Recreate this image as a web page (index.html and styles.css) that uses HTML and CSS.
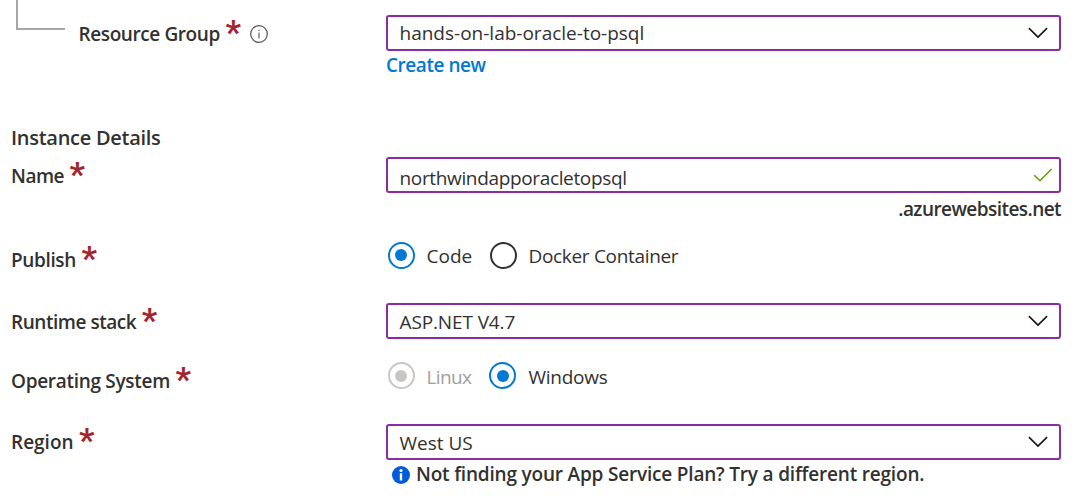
FILE: index.html
```html
<!DOCTYPE html>
<html lang="en">
<head>
<meta charset="utf-8">
<title>Create Web App</title>
<link rel="stylesheet" href="styles.css">
</head>
<body>
<svg class="sprite" aria-hidden="true">
  <symbol id="chevron" viewBox="0 0 20 12"><path d="M.9 1.1 10 10.1 19.1 1.1" fill="none" stroke="#111" stroke-width="1.5"/></symbol>
</svg>
<main class="form">
  <div class="row row-group">
    <div class="label label-nested"><span class="branch"></span><span class="text t-rg">Resource Group</span><span class="req">*</span>
      <svg class="info" viewBox="0 0 18 18"><circle cx="9" cy="9" r="8.3" fill="none" stroke="#555" stroke-width="1.2"/><path d="M9 7.6v5.8M9 4.8v1.3" stroke="#666" stroke-width="1.2"/></svg>
    </div>
    <div class="control">
      <div class="field"><span class="text t-hands">hands-on-lab-oracle-to-psql</span><svg class="chevron"><use href="#chevron"/></svg></div>
      <a class="link"><span class="text t-create">Create new</span></a>
    </div>
  </div>
  <h2 class="heading"><span class="text t-inst">Instance Details</span></h2>
  <div class="row row-name">
    <div class="label"><span class="text t-name">Name</span><span class="req">*</span></div>
    <div class="control">
      <div class="field field-name"><span class="text t-north">northwindapporacletopsql</span><svg class="check" viewBox="0 0 20 14"><path d="M1.2 7.2 7 12.7 18.6 1" fill="none" stroke="#57a300" stroke-width="1.5"/></svg></div>
      <div class="suffix"><span class="text t-azure">.azurewebsites.net</span></div>
    </div>
  </div>
  <div class="row row-publish">
    <div class="label"><span class="text t-pub">Publish</span><span class="req">*</span></div>
    <div class="control radios">
      <span class="radio on"></span><span class="opt opt-a"><span class="text t-code">Code</span></span>
      <span class="radio"></span><span class="opt"><span class="text t-docker">Docker Container</span></span>
    </div>
  </div>
  <div class="row row-runtime">
    <div class="label"><span class="text t-run">Runtime stack</span><span class="req">*</span></div>
    <div class="control"><div class="field field-low"><span class="text t-asp">ASP.NET V4.7</span><svg class="chevron"><use href="#chevron"/></svg></div></div>
  </div>
  <div class="row row-os">
    <div class="label"><span class="text t-os">Operating System</span><span class="req">*</span></div>
    <div class="control radios radios-os">
      <span class="radio off"></span><span class="opt opt-a muted"><span class="text t-linux">Linux</span></span>
      <span class="radio on"></span><span class="opt"><span class="text t-win">Windows</span></span>
    </div>
  </div>
  <div class="row row-region">
    <div class="label"><span class="text t-reg">Region</span><span class="req">*</span></div>
    <div class="control">
      <div class="field field-low"><span class="text t-west">West US</span><svg class="chevron"><use href="#chevron"/></svg></div>
      <div class="hint"><svg class="hint-icon" viewBox="0 0 18 18"><circle cx="9" cy="9" r="9" fill="#015cda"/><path d="M9 7.2v7.3" stroke="#fff" stroke-width="2.4"/><circle cx="9" cy="4.5" r="1.6" fill="#fff"/></svg><span class="text t-hint">Not finding your App Service Plan? Try a different region.</span></div>
    </div>
  </div>
</main>
</body>
</html>
```
FILE: styles.css
```css
* { box-sizing: border-box; }
body { margin: 0; background: #fff; color: #323130; font: 19px/26px "Open Sans", "Noto Sans", sans-serif; }
.sprite { display: none; }
.form { width: 1077px; height: 504px; padding-left: 11px; overflow: hidden; }
.row { display: flex; align-items: flex-start; }
.row-group { height: 122px; padding-top: 15px; }
.heading { height: 35px; margin: 0; padding-top: 3px; font-size: 20px; line-height: 26px; font-weight: 600; }
.row-name { height: 84px; }
.row-publish { height: 62px; }
.row-runtime { height: 59px; }
.row-os { height: 62px; }
.label { display: flex; flex: none; width: 375px; padding-top: 6px; font-weight: 600; }
.row-region .label { padding-top: 5px; }
.control { width: 675px; }
.text { white-space: nowrap; }
.label-nested { position: relative; padding-left: 67.5px; }
.branch { position: absolute; left: 5px; top: -16px; width: 49px; height: 31px; border: solid #a6a6a6; border-width: 0 0 2px 2px; }
.req { width: 16px; margin: -2px 0 0 5.5px; color: #a4262c; font: 700 34px/26px Roboto, sans-serif; }
.info { width: 18px; height: 18px; margin: 4px 0 0 9px; }
.field { display: flex; align-items: center; justify-content: space-between; height: 36px; padding: 0 11px 0 11.5px; border: 2px solid #8a2da5; border-radius: 3px; }
.field-low .text { padding-top: 2px; }
.chevron { width: 20px; height: 12px; }
.field-name { padding: 6px 6px 0 11.5px; }
.check { width: 20px; height: 14px; margin-top: -6px; }
.link { display: flex; margin-top: 1px; color: #0078d4; font-weight: 600; }
.suffix { margin-top: 3px; text-align: right; font-weight: 600; }
.radios { display: flex; align-items: center; height: 28px; padding-left: 2px; }
.radio { display: flex; flex: none; align-items: center; justify-content: center; width: 27px; height: 27px; border: 2px solid #323130; border-radius: 50%; }
.radio.on { border-color: #0078d4; }
.radio.on::after, .radio.off::after { content: ""; width: 12px; height: 12px; margin-left: -1px; border-radius: 50%; background: #0078d4; }
.radio.off { border-color: #c8c6c4; }
.radio.off::after { background: #c8c6c4; }
.opt { margin-left: 11.5px; padding-top: 2px; }
.opt-a { width: 63.5px; }
.radios-os { height: 27px; }
.radios-os .opt { padding-top: 3px; }
.radios-os .opt-a { width: 62.5px; }
.radios-os .opt:last-child { margin-left: 12.5px; }
.radios-os .on::after { margin-left: 1px; }
.muted { color: #a19f9d; }
.hint { display: flex; align-items: center; margin-top: 2px; padding-left: 6px; font-weight: 600; }
.hint-icon { width: 18px; height: 18px; margin-right: 6px; }
.t-hint { margin-top: -1px; letter-spacing: -.19px; }
.t-rg { letter-spacing: -.4px; }
.t-create { letter-spacing: -.45px; }
.t-inst { letter-spacing: -.28px; }
.t-name { letter-spacing: -.5px; }
.t-north { letter-spacing: -.35px; }
.t-azure { letter-spacing: -.56px; }
.t-pub { letter-spacing: -.36px; }
.t-docker { letter-spacing: -.32px; }
.t-run { letter-spacing: -.46px; }
.t-asp { letter-spacing: -.12px; }
.t-os { letter-spacing: -.3px; }
.t-linux { letter-spacing: -.6px; }
.t-win { letter-spacing: -.25px; }
```
